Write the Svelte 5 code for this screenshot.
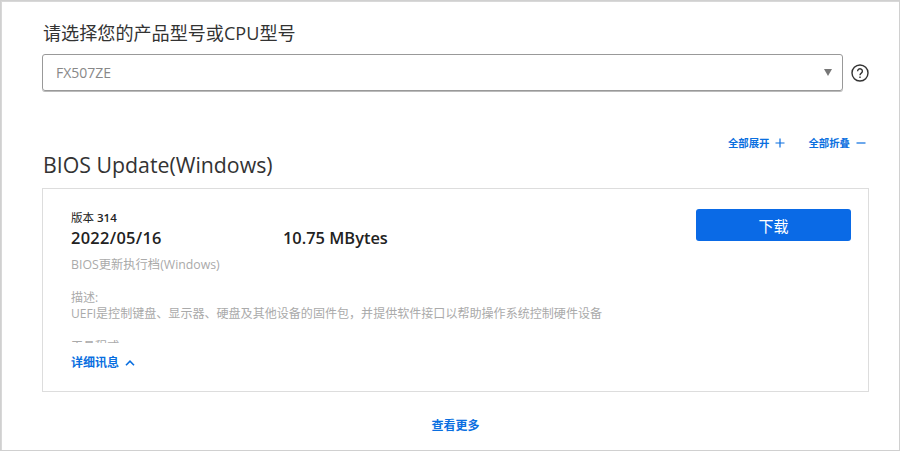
<script lang="ts">
  let model = "FX507ZE"
</script>

<div class="frame">
  <h2 class="label">请选择您的产品型号或CPU型号</h2>
  <div class="select-row">
    <div class="select">
      <span class="value">{model}</span>
      <span class="caret"></span>
    </div>
    <svg class="help" width="18" height="18" viewBox="0 0 18 18" fill="none" stroke="#333" stroke-width="1.4">
      <circle cx="9" cy="9" r="8" />
      <path d="M6.6 7.2a2.4 2.4 0 1 1 3.7 2c-.9.6-1.3 1-1.3 2" />
      <line x1="9" y1="12.6" x2="9" y2="14" />
    </svg>
  </div>

  <div class="toggles">
    <span class="toggle">全部展开
      <svg width="10" height="10" viewBox="0 0 10 10" stroke="#0a6fe0" stroke-width="1.2"><path d="M5 0.5v9M0.5 5h9" /></svg>
    </span>
    <span class="toggle">全部折叠
      <svg width="10" height="10" viewBox="0 0 10 10" stroke="#0a6fe0" stroke-width="1.2"><path d="M0.5 5h9" /></svg>
    </span>
  </div>

  <h3 class="section">BIOS Update(Windows)</h3>

  <div class="card">
    <div class="info">
      <div class="version">版本 <span class="num">314</span></div>
      <div class="meta">
        <span class="date">2022/05/16</span>
        <span class="size">10.75 MBytes</span>
      </div>
      <div class="name">BIOS更新执行档(Windows)</div>
      <div class="desc">
        <p>描述:</p>
        <p>UEFI是控制键盘、显示器、硬盘及其他设备的固件包&#xFF0C;并提供软件接口以帮助操作系统控制硬件设备</p>
        <p class="next">工具程式</p>
      </div>
      <div class="detail">详细讯息
        <svg width="10" height="6" viewBox="0 0 10 6" fill="none" stroke="#0a6fe0" stroke-width="1.6"><path d="M1 5.2 5 1.2l4 4" /></svg>
      </div>
    </div>
    <button class="download">下载</button>
  </div>

  <div class="more">查看更多</div>
</div>

<style>
  :global(body) {
    margin: 0;
    background: #fff;
  }

  .frame {
    box-sizing: border-box;
    width: 900px;
    height: 451px;
    overflow: hidden;
    padding: 20px 30px 0 41px;
    border: 1px solid #d0d0d0;
    box-shadow: inset 1px 1px 0 #d8d8d8;
    font-family: "Open Sans", "Noto Sans CJK SC", sans-serif;
    color: #333;
  }

  .label {
    margin: 0;
    padding-left: 1px;
    font-size: 18.1px;
    font-weight: 400;
    line-height: 25px;
    color: #333;
  }

  .select-row {
    display: flex;
    align-items: center;
    gap: 8px;
    margin-top: 8px;
  }

  .select {
    box-sizing: border-box;
    width: 801px;
    height: 37px;
    display: flex;
    align-items: center;
    justify-content: space-between;
    padding: 0 10px 0 13px;
    border: 1px solid #999;
    border-radius: 3px;
    box-shadow: 0 1px 0 #bbb;
  }

  .value {
    font-size: 14px;
    color: #888;
  }

  .caret {
    width: 0;
    height: 0;
    border-left: 4.5px solid transparent;
    border-right: 4.5px solid transparent;
    border-top: 7px solid #777;
    margin-bottom: 1px;
  }

  .help {
    flex: none;
  }

  .toggles {
    display: flex;
    justify-content: flex-end;
    gap: 23px;
    margin-top: 42px;
    padding-right: 3px;
  }

  .toggle {
    display: flex;
    align-items: center;
    gap: 6px;
    font-size: 10.4px;
    font-weight: 700;
    line-height: 20px;
    color: #0a6fe0;
  }

  .section {
    margin: 0;
    padding-left: 1px;
    font-size: 21.3px;
    font-weight: 400;
    line-height: 24px;
    color: #333;
  }

  .card {
    box-sizing: border-box;
    height: 204px;
    margin-top: 11px;
    display: flex;
    justify-content: space-between;
    align-items: flex-start;
    padding: 20px 17px 0 28px;
    border: 1px solid #ddd;
  }

  .info {
    flex: 1;
    padding-top: 1px;
  }

  .version {
    font-size: 11.5px;
    font-weight: 400;
    line-height: 16px;
    color: #222;
  }

  .num {
    font-weight: 600;
  }

  .meta {
    display: flex;
    margin-top: 1px;
    font-size: 16.4px;
    font-weight: 600;
    line-height: 22px;
    color: #222;
  }

  .date {
    width: 212px;
    letter-spacing: 0.3px;
  }

  .name {
    margin-top: 7px;
    font-size: 12.3px;
    line-height: 18px;
    color: #aaa;
  }

  .desc {
    height: 53px;
    margin-top: 16px;
    overflow: hidden;
    font-size: 12.06px;
    line-height: 16px;
    color: #aaa;
  }

  .desc p {
    margin: 0;
  }

  .desc .next {
    margin-top: 17px;
  }

  .detail {
    display: flex;
    align-items: center;
    gap: 6px;
    margin-top: 11px;
    font-size: 12px;
    font-weight: 700;
    line-height: 18px;
    color: #0a6fe0;
  }

  .download {
    flex: none;
    width: 155px;
    height: 32px;
    border: none;
    border-radius: 3px;
    background: #0a6ae6;
    color: #fff;
    font-family: inherit;
    font-size: 15px;
  }

  .more {
    margin-top: 25px;
    text-align: center;
    font-size: 12px;
    font-weight: 700;
    line-height: 18px;
    color: #0a6fe0;
  }
</style>
